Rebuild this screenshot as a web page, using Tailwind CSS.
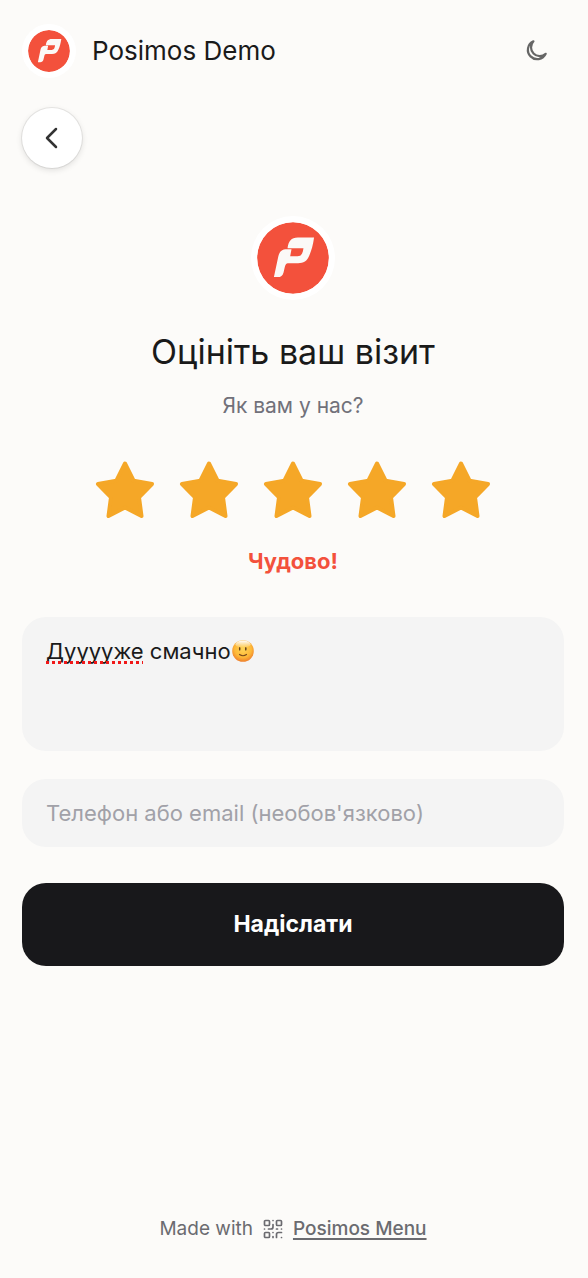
<!DOCTYPE html>
<html lang="uk">
<head>
<meta charset="utf-8">
<meta name="viewport" content="width=device-width, initial-scale=1">
<title>Posimos Demo</title>
<script src="https://cdn.jsdelivr.net/npm/@tailwindcss/browser@4"></script>
</head>
<body class="flex min-h-screen flex-col bg-[#fcfbf9] font-['Inter','Noto_Sans',sans-serif] text-[#1a1a1a]">
<svg class="hidden" aria-hidden="true">
  <symbol id="logo" viewBox="50 50 217 217">
    <circle cx="158.500" cy="158.500" r="108" fill="#f3513c"/>
    <path fill="#fbf9f7" d="M142 129C145 108 153 97 173 97H222C219 120 214 136 208 150C201 168 190 174 174 174H143C138 174 136 178 134 185L130 202C127 212 122 216 113 216H101L114 155C118 137 126 132 140 132H154L150 153H172C184 153 188 145 190 129Z"/>
  </symbol>
  <symbol id="star" viewBox="0 0 60 60">
    <path fill="#f5a727" stroke="#f5a727" stroke-width="4" stroke-linejoin="round" d="M30 3.500L38.600 20.600L57 24L44 37.300L46.500 56L30 47.500L13.500 56L16 37.300L3 24L21.400 20.600Z"/>
  </symbol>
</svg>

<header class="flex items-center justify-between pt-6 pr-9 pb-6 pl-[22px]">
  <div class="flex items-center gap-4">
    <svg class="size-[54px] rounded-full bg-white p-1.5" role="img" aria-label="Posimos"><use href="#logo"/></svg>
    <span class="text-[26px] leading-9">Posimos Demo</span>
  </div>
  <button type="button" aria-label="Темна тема" class="flex size-8 items-center justify-center text-[#666]">
    <svg class="size-7" viewBox="0 0 24 24" fill="none" stroke="currentColor" stroke-width="1.900" stroke-linecap="round" stroke-linejoin="round"><path d="M9.800 3.700A8 8 0 1 0 20.300 14.400A7.500 7.500 0 0 1 9.800 3.700Z"/></svg>
  </button>
</header>

<main class="flex grow flex-col pt-1.5 pr-6 pl-[22px]">
  <button type="button" aria-label="Назад" class="flex size-[60px] items-center justify-center rounded-full bg-white text-[#333] shadow-[0_0_0_1px_rgba(0,0,0,0.07),0_2px_6px_rgba(0,0,0,0.12)]">
    <svg class="size-7" viewBox="0 0 28 28" fill="none" stroke="currentColor" stroke-width="2.500" stroke-linecap="round" stroke-linejoin="round"><path d="M18 5L9 14L18 23"/></svg>
  </button>

  <svg class="mt-12 size-[84px] self-center rounded-full bg-white p-1.5" role="img" aria-label="Posimos"><use href="#logo"/></svg>
  <h1 class="mt-[30px] text-center text-[34px] leading-11">Оцініть ваш візит</h1>
  <p class="mt-4 text-center text-[21px] leading-8 text-[#71717a]">Як вам у нас?</p>

  <div class="mt-[38px] flex justify-center gap-6" role="group" aria-label="Оцінка">
    <button type="button" aria-label="1 зірка"><svg class="size-[60px]"><use href="#star"/></svg></button>
    <button type="button" aria-label="2 зірки"><svg class="size-[60px]"><use href="#star"/></svg></button>
    <button type="button" aria-label="3 зірки"><svg class="size-[60px]"><use href="#star"/></svg></button>
    <button type="button" aria-label="4 зірки"><svg class="size-[60px]"><use href="#star"/></svg></button>
    <button type="button" aria-label="5 зірок"><svg class="size-[60px]"><use href="#star"/></svg></button>
  </div>
  <p class="mt-[25px] text-center text-[22px] leading-8 font-bold text-[#f3513c]">Чудово!</p>

  <form class="mt-10 flex flex-col">
    <div class="grid rounded-[24px] bg-[#f4f4f4] text-[22px] leading-8">
      <textarea aria-label="Відгук" rows="3" spellcheck="false" class="col-start-1 row-start-1 block w-full resize-none px-6 pt-[18px] pb-5 outline-none">Дууууже смачно</textarea>
      <div aria-hidden="true" class="pointer-events-none col-start-1 row-start-1 flex items-start px-6 pt-[18px] pb-5 text-transparent">
        <span class="whitespace-pre"><span class="underline decoration-[#f01818] decoration-dotted decoration-3 underline-offset-2 [text-decoration-skip-ink:none]">Дууууже</span> смачно</span>
        <svg class="mt-1 size-6" viewBox="0 0 24 24">
          <defs>
            <radialGradient id="face" cx="50%" cy="40%" r="60%"><stop offset="0" stop-color="#ffd557"/><stop offset="0.650" stop-color="#fdb838"/><stop offset="1" stop-color="#ee7f2b"/></radialGradient>
            <linearGradient id="shine" x1="0" y1="0" x2="0" y2="1"><stop offset="0" stop-color="#fff"/><stop offset="1" stop-color="#fff" stop-opacity="0"/></linearGradient>
          </defs>
          <circle cx="12" cy="12" r="10.800" fill="url(#face)"/>
          <ellipse cx="12" cy="5.200" rx="7.500" ry="3.600" fill="url(#shine)"/>
          <ellipse cx="8.700" cy="9.800" rx="0.800" ry="1.900" fill="#63401e"/>
          <ellipse cx="14.800" cy="9.800" rx="0.800" ry="1.900" fill="#63401e"/>
          <path d="M8.500 15.500Q12 18 15.500 15.500" fill="none" stroke="#7a4a1c" stroke-width="1.200" stroke-linecap="round"/>
        </svg>
      </div>
    </div>
    <input type="text" aria-label="Телефон або email" placeholder="Телефон або email (необов'язково)" class="mt-7 h-[68px] w-full rounded-[24px] bg-[#f4f4f4] px-6 text-[22px] outline-none placeholder:text-[#a1a1a8]">
    <button type="submit" class="mt-9 h-[83px] w-full rounded-[24px] bg-[#18181b] text-[23px] font-bold text-white">Надіслати</button>
  </form>
</main>

<footer class="flex items-center justify-center gap-2.5 pr-0.5 pb-[31px] text-[19px] leading-9 text-[#6b6b70]">
  <span>Made with</span>
  <svg class="size-5" viewBox="0 0 20 20" fill="none" stroke="currentColor" stroke-width="1.700" stroke-linecap="round" stroke-linejoin="round">
    <rect x="1.500" y="1.500" width="5" height="5" rx="1"/><rect x="13.500" y="1.500" width="5" height="5" rx="1"/><rect x="1.500" y="13.500" width="5" height="5" rx="1"/>
    <path d="M18.500 13.500H15.500A2 2 0 0 0 13.500 15.500V18.500M18.500 18.500V18.510M10 5.500V8A2 2 0 0 1 8 10H5.500M1.500 10H1.510M10 1.500H10.010M10 13.500V13.510M13.500 10H14.500M18.500 10V10.010M10 18.500V17.500"/>
  </svg>
  <a href="#" class="font-medium underline decoration-[1.5px] underline-offset-3">Posimos Menu</a>
</footer>
</body>
</html>
